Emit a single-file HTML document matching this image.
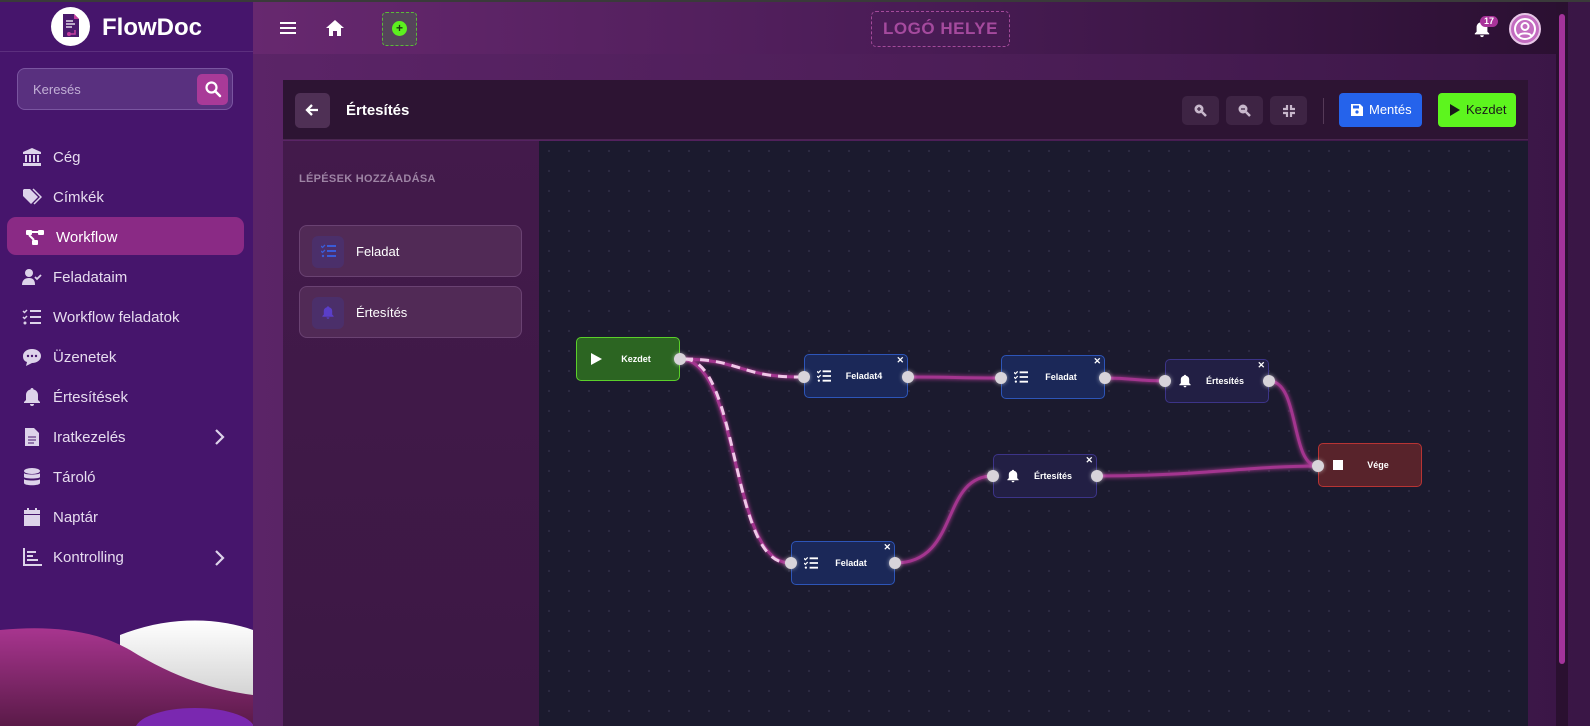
<!DOCTYPE html>
<html><head><meta charset="utf-8"><style>
*{box-sizing:border-box;margin:0;padding:0}
body{width:1590px;height:726px;overflow:hidden;font-family:"Liberation Sans",sans-serif;background:#4e1d5e;position:relative}
.abs{position:absolute}
#side{left:0;top:0;width:253px;height:726px;background:#46156c;overflow:hidden}
#main{left:253px;top:0;width:1337px;height:726px;background:linear-gradient(90deg,#5b2467 0%,#4a1d55 60%,#3a1646 100%)}
#hdr{left:253px;top:0;width:1303px;height:54px;background:linear-gradient(90deg,#67286f,#4a1c56 50%,#2b1032)}
.nav{position:absolute;left:22px;color:#e6dcef;font-size:15px;display:flex;align-items:center;height:20px}
.nav svg{width:20px;height:20px;margin-right:11px;fill:#ddd3ea}
.node{position:absolute;width:104px;height:44px;border-radius:5px;border:1px solid;color:#fff;font-size:9px;font-weight:bold;display:flex;align-items:center;justify-content:center;padding-left:16px}
.node .x{position:absolute;right:3px;top:0px;font-size:9px}
.node .ic{position:absolute;left:12px;top:14px;width:14px;height:14px;fill:#fff}
.port{position:absolute;width:12px;height:12px;border-radius:50%;background:#d8d4da;box-shadow:0 0 4px #fff8}
.tbtn{position:absolute;top:96px;width:37px;height:29px;border-radius:5px;background:#3e2444}
.card{position:absolute;left:299px;width:223px;height:52px;border-radius:8px;background:#512a56;border:1px solid #6a4272;color:#fff;font-size:13px}
.card .ib{position:absolute;left:12px;top:10px;width:32px;height:32px;border-radius:6px;background:#4b2f6a}
.card span{position:absolute;left:56px;top:18px}
</style></head><body>
<div class="abs" style="left:0;top:0;width:1590px;height:2px;background:#3a3a3a;z-index:5"></div>
<div id="main" class="abs"></div>
<div id="hdr" class="abs"></div>
<div class="abs" style="left:1556px;top:2px;width:12px;height:724px;background:#2a1030"></div>
<div class="abs" style="left:1559px;top:14px;width:6px;height:650px;border-radius:3px;background:#a3339a"></div>

<div id="side" class="abs">
  <div class="abs" style="left:0;top:51px;width:253px;height:1px;background:#5c2f7e"></div>
  <div class="abs" style="left:51px;top:7px;width:39px;height:39px;border-radius:50%;background:#fff"></div>
  <svg class="abs" style="left:60px;top:13px" width="22" height="26" viewBox="0 0 22 26"><path d="M3 1h11l5 5v18H3z" fill="#4a1a6c"/><path d="M14 1v5h5" fill="#c53ea0"/><path d="M6 8h7M6 11h9M6 14h6" stroke="#fff" stroke-width="1.3"/><circle cx="9" cy="21" r="2" fill="#c53ea0"/><path d="M9 21h6v-4" stroke="#c53ea0" stroke-width="1.5" fill="none"/></svg>
  <div class="abs" style="left:102px;top:14px;color:#fff;font-size:24px;font-weight:bold">FlowDoc</div>
  <div class="abs" style="left:17px;top:68px;width:216px;height:42px;border-radius:8px;background:#59307f;border:1px solid #7a55a0"></div>
  <div class="abs" style="left:33px;top:82px;color:#c2b0d6;font-size:13px">Keresés</div>
  <div class="abs" style="left:197px;top:74px;width:31px;height:31px;border-radius:5px;background:#a93a98"></div>
  <svg class="abs" style="left:204px;top:80px" width="18" height="18" viewBox="0 0 18 18"><circle cx="7.5" cy="7.5" r="5" stroke="#fff" stroke-width="2.2" fill="none"/><path d="M11 11l5 5" stroke="#fff" stroke-width="2.5" stroke-linecap="round"/></svg>
  <div class="abs" style="left:7px;top:217px;width:237px;height:38px;border-radius:9px;background:#8a2a85"></div>
  <div class="nav" style="top:147px"><svg viewBox="0 0 20 20"><path d="M10 1l9 4v2H1V5zM3 8h2v7H3zM7 8h2v7H7zM11 8h2v7h-2zM15 8h2v7h-2zM1 16h18v3H1z"/></svg>Cég</div>
  <div class="nav" style="top:187px"><svg viewBox="0 0 20 20"><path d="M1 3v6l8 8 7-7-8-8H2zM4 5a1.3 1.3 0 1 0 .1 0z"/><path d="M11 2l8 8-7 7" stroke="#ddd3ea" stroke-width="1.5" fill="none"/></svg>Címkék</div>
  <div class="nav" style="top:227px;left:25px;color:#fff"><svg viewBox="0 0 20 20" style="fill:#fff"><rect x="1" y="3" width="6" height="5" rx="1"/><rect x="13" y="3" width="6" height="5" rx="1"/><rect x="7" y="13" width="6" height="5" rx="1"/><path d="M7 5h6M4 8l5 5" stroke="#fff" stroke-width="2"/></svg>Workflow</div>
  <div class="nav" style="top:267px"><svg viewBox="0 0 20 20"><circle cx="7" cy="6" r="4"/><path d="M0 18c0-5 3-7 7-7s6 2 6 7z"/><path d="M13 10l2 2 4-4" stroke="#ddd3ea" stroke-width="1.8" fill="none"/></svg>Feladataim</div>
  <div class="nav" style="top:307px"><svg viewBox="0 0 20 20"><path d="M1 4l1.5 1.5L5 3M1 10l1.5 1.5L5 9" stroke="#ddd3ea" stroke-width="1.5" fill="none"/><circle cx="3" cy="16" r="1.5"/><path d="M8 3h11v2H8zM8 9h11v2H8zM8 15h11v2H8z"/></svg>Workflow feladatok</div>
  <div class="nav" style="top:347px"><svg viewBox="0 0 20 20"><path d="M10 2c5 0 9 3 9 7s-4 7-9 7l-6 3 1-4C2 14 1 12 1 9c0-4 4-7 9-7z"/><circle cx="6" cy="9" r="1.2" fill="#46156c"/><circle cx="10" cy="9" r="1.2" fill="#46156c"/><circle cx="14" cy="9" r="1.2" fill="#46156c"/></svg>Üzenetek</div>
  <div class="nav" style="top:387px"><svg viewBox="0 0 20 20"><path d="M10 1c1 0 1.5.7 1.5 1.5C14 3 16 5 16 8v5l2 2v1H2v-1l2-2V8c0-3 2-5 4.5-5.5C8.5 1.7 9 1 10 1zM8 17h4a2 2 0 0 1-4 0z"/></svg>Értesítések</div>
  <div class="nav" style="top:427px"><svg viewBox="0 0 20 20"><path d="M3 1h9l5 5v13H3z"/><path d="M6 10h8M6 13h8M6 16h6" stroke="#46156c" stroke-width="1"/></svg>Iratkezelés</div>
  <div class="nav" style="top:467px"><svg viewBox="0 0 20 20"><ellipse cx="10" cy="4" rx="8" ry="3"/><path d="M2 6c0 2 16 2 16 0v4c0 2-16 2-16 0zM2 12c0 2 16 2 16 0v4c0 3-16 3-16 0z"/></svg>Tároló</div>
  <div class="nav" style="top:507px"><svg viewBox="0 0 20 20"><path d="M5 1h2v3H5zM13 1h2v3h-2zM2 3h16v4H2zM2 8h16v11H2z"/></svg>Naptár</div>
  <div class="nav" style="top:547px"><svg viewBox="0 0 20 20"><path d="M1 1h2v16h17v2H1zM5 4h9v2H5zM5 8h6v2H5zM5 12h11v2H5z"/></svg>Kontrolling</div>
  <svg class="abs" style="left:213px;top:428px" width="12" height="18"><path d="M3 2l7 7-7 7" stroke="#ddd3ea" stroke-width="2.2" fill="none"/></svg>
  <svg class="abs" style="left:213px;top:549px" width="12" height="18"><path d="M3 2l7 7-7 7" stroke="#ddd3ea" stroke-width="2.2" fill="none"/></svg>
  <svg class="abs" style="left:0;top:600px" width="253" height="126" viewBox="0 0 253 126">
    <defs><linearGradient id="w" x1="0" y1="0" x2="0" y2="1"><stop offset="0" stop-color="#fff"/><stop offset="1" stop-color="#c8c8c8"/></linearGradient>
    <linearGradient id="p" x1="0" y1="0" x2="0" y2="1"><stop offset="0" stop-color="#a8358f"/><stop offset="1" stop-color="#5a1a48"/></linearGradient></defs>
    <path d="M120 35C170 15 220 18 253 30V115H120z" fill="url(#w)"/>
    <path d="M0 30C50 25 95 30 130 50C175 78 215 90 253 95V126H0z" fill="url(#p)"/>
    <ellipse cx="195" cy="130" rx="60" ry="22" fill="#7a28b0"/>
  </svg>
</div>

<svg class="abs" style="left:280px;top:21px" width="16" height="14"><path d="M0 2h16M0 7h16M0 12h16" stroke="#fff" stroke-width="2"/></svg>
<svg class="abs" style="left:325px;top:19px" width="20" height="18" viewBox="0 0 20 18"><path d="M10 1l9 8h-3v8h-4v-5H8v5H4V9H1z" fill="#fff"/></svg>
<div class="abs" style="left:382px;top:12px;width:35px;height:34px;border-radius:4px;background:#55445a;border:1px dashed #5db83a"></div>
<div class="abs" style="left:392px;top:21px;width:15px;height:15px;border-radius:50%;background:#5cf01e;color:#1a3a10;font-size:12px;line-height:15px;text-align:center;font-weight:bold">+</div>
<div class="abs" style="left:871px;top:11px;width:139px;height:36px;border:1px dashed #a34a9a;border-radius:5px;color:#a54a9e;font-size:17px;font-weight:bold;text-align:center;line-height:34px;letter-spacing:.5px">LOGÓ HELYE</div>
<svg class="abs" style="left:1473px;top:20px" width="18" height="18" viewBox="0 0 20 20"><path d="M10 1c1 0 1.5.7 1.5 1.5C14 3 16 5 16 8v5l2 2v1H2v-1l2-2V8c0-3 2-5 4.5-5.5C8.5 1.7 9 1 10 1zM8 17h4a2 2 0 0 1-4 0z" fill="#fff"/></svg>
<div class="abs" style="left:1480px;top:16px;width:18px;height:11px;border-radius:6px;background:#a9339a;color:#fff;font-size:9px;font-weight:bold;text-align:center;line-height:11px">17</div>
<div class="abs" style="left:1509px;top:13px;width:32px;height:32px;border-radius:50%;background:#c36cc0;border:2px solid #e8c8e8"></div>
<svg class="abs" style="left:1513px;top:17px" width="24" height="24" viewBox="0 0 24 24"><circle cx="12" cy="12" r="10" stroke="#fff" stroke-width="2" fill="none"/><circle cx="12" cy="9.5" r="3.5" stroke="#fff" stroke-width="2" fill="none"/><path d="M5.5 19c2-3.5 11-3.5 13 0" stroke="#fff" stroke-width="2" fill="none"/></svg>

<div class="abs" style="left:283px;top:80px;width:1245px;height:60px;background:#2d1433;border-bottom:1px solid #4a2650"></div>
<div class="abs" style="left:295px;top:93px;width:35px;height:35px;border-radius:5px;background:#4f3055"></div>
<svg class="abs" style="left:304px;top:102px" width="16" height="16"><path d="M14 8H3M8 3L3 8l5 5" stroke="#fff" stroke-width="2.3" fill="none"/></svg>
<div class="abs" style="left:346px;top:102px;color:#fff;font-size:15px;font-weight:bold">Értesítés</div>
<div class="tbtn" style="left:1182px"></div><div class="tbtn" style="left:1226px"></div><div class="tbtn" style="left:1270px"></div>
<svg class="abs" style="left:1193px;top:103px" width="14" height="14"><circle cx="6" cy="6" r="4.5" fill="#c8b8cc"/><path d="M9 9l4 4" stroke="#c8b8cc" stroke-width="2.5"/><path d="M4 6h4M6 4v4" stroke="#3e2444" stroke-width="1.3"/></svg>
<svg class="abs" style="left:1237px;top:103px" width="14" height="14"><circle cx="6" cy="6" r="4.5" fill="#c8b8cc"/><path d="M9 9l4 4" stroke="#c8b8cc" stroke-width="2.5"/><path d="M4 6h4" stroke="#3e2444" stroke-width="1.3"/></svg>
<svg class="abs" style="left:1282px;top:104px" width="14" height="14"><path d="M1 5h4V1M9 1v4h4M13 9H9v4M5 13V9H1" stroke="#c8b8cc" stroke-width="2.2" fill="none"/></svg>
<div class="abs" style="left:1323px;top:98px;width:1px;height:26px;background:#553a58"></div>
<div class="abs" style="left:1339px;top:93px;width:83px;height:34px;border-radius:4px;background:#2563eb;color:#fff;font-size:13px;line-height:34px;padding-left:30px">Mentés</div>
<svg class="abs" style="left:1351px;top:104px" width="12" height="12"><path d="M0 0h9l3 3v9H0z" fill="#fff"/><rect x="2" y="1.5" width="6" height="3" fill="#2563eb"/><circle cx="6" cy="8" r="1.6" fill="#2563eb"/></svg>
<div class="abs" style="left:1438px;top:93px;width:78px;height:34px;border-radius:4px;background:#5df51e;color:#1a1a1a;font-size:13px;line-height:34px;padding-left:28px">Kezdet</div>
<svg class="abs" style="left:1449px;top:104px" width="11" height="12"><path d="M1 0l10 6-10 6z" fill="#1a1a1a"/></svg>

<div class="abs" style="left:283px;top:141px;width:256px;height:585px;background:linear-gradient(180deg,#431a4b,#3c1844)"></div>
<div class="abs" style="left:299px;top:173px;color:#9d84a4;font-size:11px;font-weight:bold;letter-spacing:.3px">LÉPÉSEK HOZZÁADÁSA</div>
<div class="card" style="top:225px"><div class="ib"></div><svg class="abs" style="left:21px;top:18px" width="15" height="14"><path d="M0 2l1.5 1.5L4 1M0 7l1.5 1.5L4 6" stroke="#3a5bd8" stroke-width="1.3" fill="none"/><circle cx="2" cy="12" r="1.2" fill="#3a5bd8"/><path d="M6 1h9v2H6zM6 6h9v2H6zM6 11h9v2H6z" fill="#3a5bd8"/></svg><span>Feladat</span></div>
<div class="card" style="top:286px"><div class="ib"></div><svg class="abs" style="left:21px;top:18px" width="14" height="15" viewBox="0 0 20 20"><path d="M10 1c1 0 1.5.7 1.5 1.5C14 3 16 5 16 8v5l2 2v1H2v-1l2-2V8c0-3 2-5 4.5-5.5C8.5 1.7 9 1 10 1zM8 17h4a2 2 0 0 1-4 0z" fill="#5a3ec8"/></svg><span>Értesítés</span></div>

<div class="abs" style="left:539px;top:141px;width:989px;height:585px;background-color:#1b1a2e;background-image:radial-gradient(#2c2b42 1px,transparent 1.3px);background-size:20px 20px"></div>

<svg class="abs" style="left:0;top:0" width="1590" height="726">
<g fill="none" stroke="#a3358f" stroke-width="3" style="filter:drop-shadow(0 0 2px #c040a0)">
<path d="M680 359C740 359 740 377 800 377"/>
<path d="M680 359C740 359 730 563 790 563"/>
<path d="M908 377C960 377 950 378 1000 378"/>
<path d="M1105 378C1135 378 1135 381 1165 381"/>
<path d="M1269 381C1300 381 1290 466 1318 466"/>
<path d="M1097 476C1200 476 1250 466 1318 466"/>
<path d="M895 563C960 563 940 476 993 476"/>
</g>
<g fill="none" stroke="#f0c8e8" stroke-width="3" stroke-dasharray="9 7">
<path d="M684 359C740 359 740 377 798 377"/>
<path d="M684 359C740 359 730 563 788 563"/>
</g>
</svg>

<div class="node" style="left:576px;top:337px;background:#2c6522;border-color:#5bd02a"><svg class="ic" viewBox="0 0 14 14"><path d="M2 1l11 6-11 6z"/></svg>Kezdet</div>
<div class="node" style="left:804px;top:354px;background:#1b2858;border-color:#2d55b8"><span class="x">✕</span><svg class="ic" viewBox="0 0 15 14"><path d="M0 2l1.5 1.5L4 1M0 7l1.5 1.5L4 6" stroke="#fff" stroke-width="1.3" fill="none"/><circle cx="2" cy="12" r="1.2"/><path d="M6 1h9v2H6zM6 6h9v2H6zM6 11h9v2H6z"/></svg>Feladat4</div>
<div class="node" style="left:1001px;top:355px;background:#1b2858;border-color:#2d55b8"><span class="x">✕</span><svg class="ic" viewBox="0 0 15 14"><path d="M0 2l1.5 1.5L4 1M0 7l1.5 1.5L4 6" stroke="#fff" stroke-width="1.3" fill="none"/><circle cx="2" cy="12" r="1.2"/><path d="M6 1h9v2H6zM6 6h9v2H6zM6 11h9v2H6z"/></svg>Feladat</div>
<div class="node" style="left:1165px;top:359px;background:#221f44;border-color:#3c3488"><span class="x">✕</span><svg class="ic" viewBox="0 0 20 20"><path d="M10 1c1 0 1.5.7 1.5 1.5C14 3 16 5 16 8v5l2 2v1H2v-1l2-2V8c0-3 2-5 4.5-5.5C8.5 1.7 9 1 10 1zM8 17h4a2 2 0 0 1-4 0z"/></svg>Értesítés</div>
<div class="node" style="left:993px;top:454px;background:#221f44;border-color:#3c3488"><span class="x">✕</span><svg class="ic" viewBox="0 0 20 20"><path d="M10 1c1 0 1.5.7 1.5 1.5C14 3 16 5 16 8v5l2 2v1H2v-1l2-2V8c0-3 2-5 4.5-5.5C8.5 1.7 9 1 10 1zM8 17h4a2 2 0 0 1-4 0z"/></svg>Értesítés</div>
<div class="node" style="left:791px;top:541px;background:#1b2858;border-color:#2d55b8"><span class="x">✕</span><svg class="ic" viewBox="0 0 15 14"><path d="M0 2l1.5 1.5L4 1M0 7l1.5 1.5L4 6" stroke="#fff" stroke-width="1.3" fill="none"/><circle cx="2" cy="12" r="1.2"/><path d="M6 1h9v2H6zM6 6h9v2H6zM6 11h9v2H6z"/></svg>Feladat</div>
<div class="node" style="left:1318px;top:443px;background:#58232b;border-color:#b83434"><svg class="ic" viewBox="0 0 14 14"><rect x="2" y="2" width="10" height="10"/></svg>Vége</div>

<div class="port" style="left:674px;top:353px"></div>
<div class="port" style="left:798px;top:371px"></div><div class="port" style="left:902px;top:371px"></div>
<div class="port" style="left:995px;top:372px"></div><div class="port" style="left:1099px;top:372px"></div>
<div class="port" style="left:1159px;top:375px"></div><div class="port" style="left:1263px;top:375px"></div>
<div class="port" style="left:987px;top:470px"></div><div class="port" style="left:1091px;top:470px"></div>
<div class="port" style="left:785px;top:557px"></div><div class="port" style="left:889px;top:557px"></div>
<div class="port" style="left:1312px;top:460px"></div>
</body></html>
